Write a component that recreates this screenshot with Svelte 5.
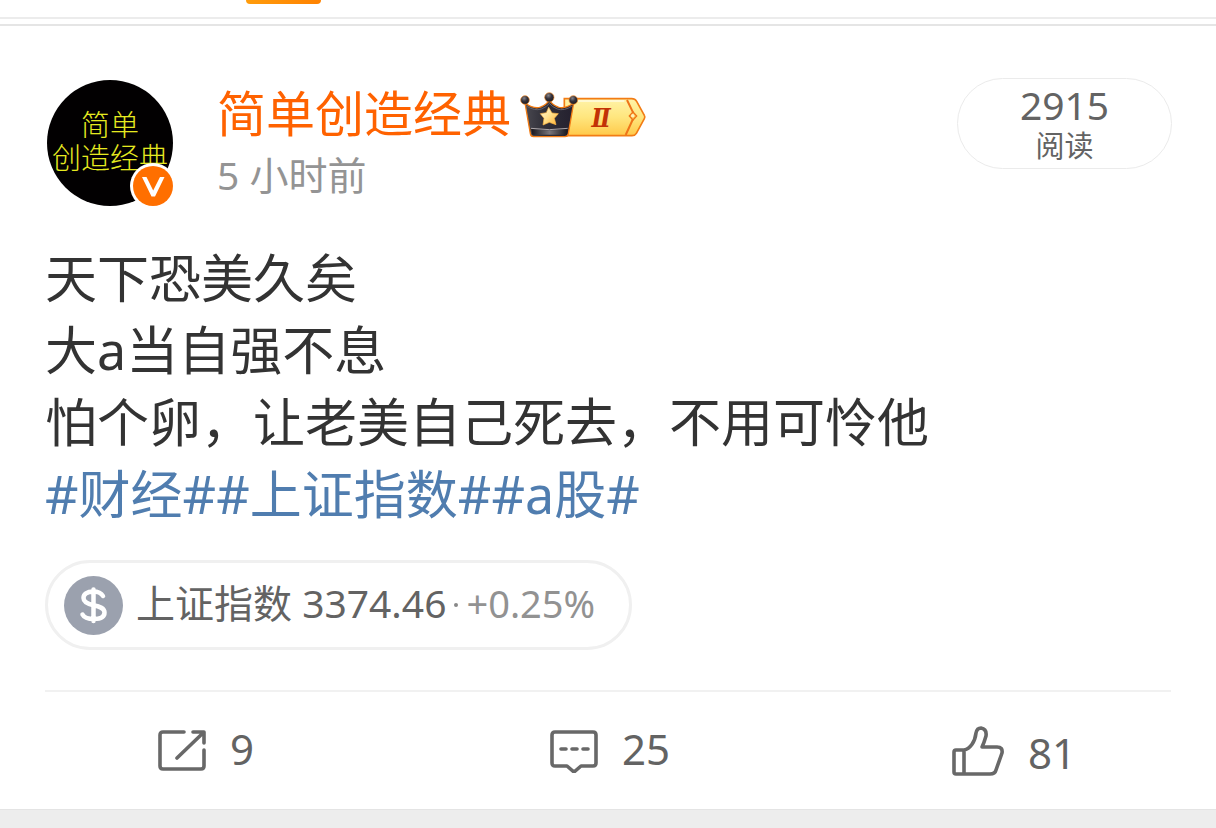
<script>
  const author = '简单创造经典';
  const lines = ['天下恐美久矣', '大a当自强不息', '怕个卵，让老美自己死去，不用可怜他'];
  const topics = ['#财经#', '#上证指数#', '#a股#'];
</script>

<div class="page">
  <div class="tabs"><span class="marker"></span></div>
  <div class="seam"></div>

  <article>
    <header>
      <a class="avatar" href="#author" aria-label={author}>
        <span class="face"><span>简单</span><span>创造经典</span></span>
        <svg class="verified" viewBox="0 0 46 46" aria-hidden="true">
          <circle cx="23" cy="23" r="23" fill="#fff" />
          <circle cx="23" cy="23" r="20" fill="#ff6f00" />
          <path d="M12 14H16.500L23.200 27.500L30 14H34.500L25 33.500H21.500Z" fill="#fff" />
        </svg>
      </a>

      <div class="who">
        <div class="name-row">
          <a class="name" href="#author">{author}</a>
          <svg class="level" viewBox="54 24 384 156" aria-hidden="true">
            <defs>
              <linearGradient id="gold" x1="0" y1="0" x2="0" y2="1">
                <stop offset="0" stop-color="#fff3a8" />
                <stop offset=".5" stop-color="#ffe67e" />
                <stop offset="1" stop-color="#ffc94a" />
              </linearGradient>
              <linearGradient id="night" x1="0" y1="0" x2="1" y2="0">
                <stop offset="0" stop-color="#494850" />
                <stop offset=".4" stop-color="#302f38" />
                <stop offset="1" stop-color="#24202f" />
              </linearGradient>
              <linearGradient id="band" x1="0" y1="0" x2="1" y2="0">
                <stop offset="0" stop-color="#17161c" />
                <stop offset=".5" stop-color="#777479" />
                <stop offset="1" stop-color="#17161c" />
              </linearGradient>
              <radialGradient id="bead" cx=".4" cy=".3" r=".7">
                <stop offset="0" stop-color="#85838a" />
                <stop offset=".5" stop-color="#35333c" />
                <stop offset="1" stop-color="#1b1920" />
              </radialGradient>
              <linearGradient id="star" x1="0" y1="0" x2="1" y2="1">
                <stop offset="0" stop-color="#fffbe0" />
                <stop offset=".5" stop-color="#ffe08a" />
                <stop offset="1" stop-color="#ffae2b" />
              </linearGradient>
            </defs>
            <path d="M190 53H392Q402 53 407 61L430 103Q433 108 430 113L406 157Q402 164 393 164H190Z" fill="url(#gold)" stroke="#f27c14" stroke-width="5" />
            <path d="M205 60H370" stroke="#fffbe2" stroke-width="4" />
            <path d="M378 57L396 94M396 114L374 162" fill="none" stroke="#ee7419" stroke-width="6" />
            <path d="M385 105L396 93L407 105L396 117Z" fill="#ffd15a" stroke="#ee7419" stroke-width="4" />
            <circle cx="395" cy="104" r="5" fill="#fff0bd" />
            <text x="300" y="139" text-anchor="middle">Ⅱ</text>
            <path d="M72 66Q101 86 119 78Q136 72 145 57Q154 72 171 78Q189 86 218 66L202 158Q201 167 192 167H98Q89 167 88 158Z" fill="url(#night)" stroke="#f27c14" stroke-width="4" stroke-linejoin="round" />
            <path d="M76 75Q101 91 121 84Q138 78 145 67Q153 78 169 84Q189 91 213 75" fill="none" stroke="#65626c" stroke-width="3" />
            <path d="M91 144Q145 152 200 144L198 161H94Z" fill="url(#band)" />
            <path d="M90 142Q145 150 200 142" fill="none" stroke="#aaa5a8" stroke-width="3" />
            <g fill="url(#bead)" stroke="#f28a28" stroke-width="2">
              <circle cx="72" cy="57" r="13" />
              <circle cx="145" cy="49" r="14" />
              <circle cx="217" cy="57" r="13" />
            </g>
            <path d="M143 79L153 96L172 98L160 112L165 131L145 124L126 132L129 112L118 98L136 95Z" fill="url(#star)" stroke="#ffb646" stroke-width="2" stroke-linejoin="round" />
          </svg>
        </div>
        <time>5 小时前</time>
      </div>

      <div class="reads"><strong>2915</strong><span>阅读</span></div>
    </header>

    <p>
      {#each lines as line}{line}<br />{/each}{#each topics as topic}<a href="#topic">{topic}</a>{/each}
    </p>

    <a class="quote" href="#index">
      <svg viewBox="0 0 59 59" aria-hidden="true">
        <circle cx="29.500" cy="29.500" r="29.500" fill="#9ba1ae" />
        <path d="M39 20C37 16.500 33 15.500 29 15.500C23 15.500 19.500 18.500 19.500 22C19.500 26.500 24 28 29.500 29.200C36 30.500 40.500 32 40.500 36.500C40.500 41 36 43 30 43C24 43 20 41.500 18.500 38.500M29.500 13.500V45" fill="none" stroke="#fff" stroke-width="4.500" stroke-linecap="round" stroke-linejoin="round" />
      </svg>
      <span class="index">上证指数 3374.46</span><i></i><span class="change">+0.25%</span>
    </a>
  </article>

  <footer>
    <button aria-label="转发 9">
      <svg width="48" height="44" viewBox="0 0 48 44" aria-hidden="true">
        <path d="M26 3H5Q2 3 2 6V37Q2 40 5 40H43Q46 40 46 37V21M35 3H46V14M45 4L19 29" />
      </svg>
      <span>9</span>
    </button>
    <button aria-label="评论 25">
      <svg width="48" height="44" viewBox="0 0 48 44" aria-hidden="true">
        <path d="M5 3H43Q46 3 46 6V34Q46 37 43 37H31L24 43L17 37H5Q2 37 2 34V6Q2 3 5 3Z" />
        <path d="M11 20H16M22 20H27M33 20H38" />
      </svg>
      <span>25</span>
    </button>
    <button class="like" aria-label="赞 81">
      <svg width="52" height="50" viewBox="0 0 52 50" aria-hidden="true">
        <path d="M12 24H4Q2 24 2 26V46Q2 48 4 48H38Q43 48 44 44L50 27Q51 21 45 21H30Q32 17 34 10Q35 3 29 2Q25 2 24 7C23 16 18 23 12 24V48" />
      </svg>
      <span>81</span>
    </button>
  </footer>
</div>

<style>
  :global(body) {
    margin: 0;
    background: #ededed;
    font-family: 'Noto Sans', 'Noto Sans CJK SC', sans-serif;
  }
  .page {
    background: #fff;
    border-bottom: 1px solid #e4e4e4;
  }
  a {
    color: inherit;
    text-decoration: none;
  }
  svg {
    display: block;
    flex: none;
  }
  .tabs {
    height: 17px;
    padding-left: 246px;
    border-bottom: 2px solid #ececec;
  }
  .marker {
    display: block;
    width: 75px;
    height: 4px;
    border-radius: 0 0 5px 5px;
    background: linear-gradient(90deg, #ff9c0c, #ff8200);
  }
  .seam {
    height: 5px;
    border-bottom: 2px solid #e5e5e5;
  }
  article {
    margin: 0 45px;
    padding: 52px 0 40px;
    border-bottom: 2px solid #f1f1f1;
  }
  header {
    display: flex;
    align-items: flex-start;
  }
  .avatar {
    position: relative;
    flex: none;
    margin: 2px 44px 0 2px;
  }
  .face {
    display: flex;
    flex-direction: column;
    align-items: center;
    box-sizing: border-box;
    width: 126px;
    height: 126px;
    padding-top: 27px;
    border-radius: 50%;
    background: #020001;
    color: #e6ea20;
    font-family: 'Noto Sans CJK SC', sans-serif;
    font-size: 29px;
    font-weight: 300;
    line-height: 33px;
    white-space: nowrap;
  }
  .verified {
    position: absolute;
    right: -3px;
    bottom: -3px;
    width: 46px;
  }
  .who {
    flex: 1;
  }
  .name-row {
    display: flex;
    align-items: center;
    gap: 8px;
    height: 70px;
  }
  .name {
    color: #ff6200;
    font-size: 49px;
    line-height: 70px;
  }
  .level {
    width: 128px;
    height: 52px;
    margin-top: 4px;
  }
  .level text {
    fill: #c23206;
    font: italic bold 76px 'DejaVu Serif Condensed', 'DejaVu Serif', serif;
  }
  time {
    display: block;
    color: #949494;
    font-size: 39px;
    line-height: 54px;
  }
  .reads {
    display: flex;
    flex-direction: column;
    align-items: center;
    box-sizing: border-box;
    min-width: 215px;
    height: 91px;
    margin-right: -1px;
    padding-top: 4px;
    border: 1px solid #ebebeb;
    border-radius: 46px;
    color: #636363;
  }
  .reads strong {
    font-size: 39px;
    font-weight: 400;
    line-height: 44px;
  }
  .reads span {
    font-size: 29px;
    line-height: 38px;
  }
  p {
    margin: 36px 0 30px;
    color: #333;
    font-size: 52px;
    line-height: 72px;
  }
  p a {
    color: #507daf;
  }
  .quote {
    display: inline-flex;
    align-items: center;
    box-sizing: border-box;
    height: 90px;
    padding: 0 34px 0 16px;
    border: 3px solid #f0f0f0;
    border-radius: 45px;
    color: #636363;
    line-height: 54px;
    vertical-align: top;
  }
  .quote svg {
    width: 59px;
    margin-right: 13px;
  }
  .quote i {
    width: 4px;
    height: 4px;
    margin: 0 8px;
    border-radius: 50%;
    background: #888;
  }
  .quote span {
    padding-bottom: 4px;
  }
  .index {
    font-size: 39px;
  }
  .change {
    color: #929292;
    font-size: 38px;
  }
  footer {
    display: grid;
    grid-template-columns: repeat(3, 1fr);
    height: 117px;
    padding-left: 4px;
  }
  button {
    display: flex;
    align-items: center;
    justify-content: center;
    gap: 24px;
    padding: 0;
    border: 0;
    background: none;
    color: #636363;
    font: 42px/58px 'Noto Sans', sans-serif;
  }
  button span {
    padding-bottom: 4px;
  }
  .like span {
    padding: 4px 0 0;
  }
  button path {
    fill: none;
    stroke: #686868;
    stroke-width: 3.600;
    stroke-linecap: round;
    stroke-linejoin: round;
  }
</style>
